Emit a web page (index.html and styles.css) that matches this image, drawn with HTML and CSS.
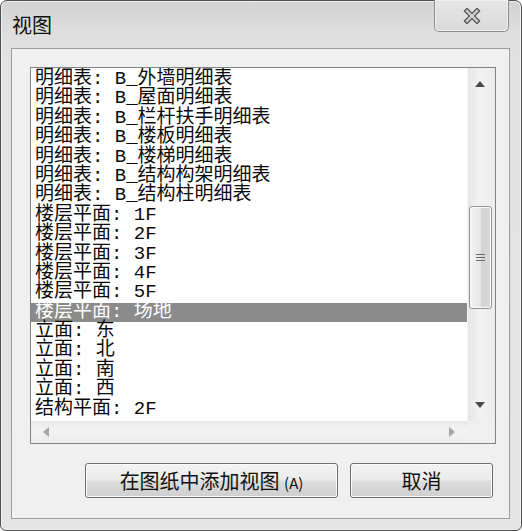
FILE: index.html
```html
<!DOCTYPE html>
<html lang="zh-CN">
<head>
    <meta charset="UTF-8">
    <title>视图</title>
    <link rel="stylesheet" href="styles.css">
</head>
<body>
    <div class="window">
        <div class="titlebar">
            <span class="title">视图</span>
            <div class="close-btn">
                <svg width="18" height="16" viewBox="0 0 18 16">
                    <path d="M4 3 L14 13 M14 3 L4 13" stroke="#5c5c5c" stroke-width="5" stroke-linecap="square" fill="none"/>
                    <path d="M4 3 L14 13 M14 3 L4 13" stroke="#d4d4d4" stroke-width="2.2" stroke-linecap="square" fill="none"/>
                </svg>
            </div>
        </div>

        <div class="client">
            <div class="listbox">
                <div class="list-content">
                    <div class="row">明细表: B_外墙明细表</div>
                    <div class="row">明细表: B_屋面明细表</div>
                    <div class="row">明细表: B_栏杆扶手明细表</div>
                    <div class="row">明细表: B_楼板明细表</div>
                    <div class="row">明细表: B_楼梯明细表</div>
                    <div class="row">明细表: B_结构构架明细表</div>
                    <div class="row">明细表: B_结构柱明细表</div>
                    <div class="row">楼层平面: 1F</div>
                    <div class="row">楼层平面: 2F</div>
                    <div class="row">楼层平面: 3F</div>
                    <div class="row">楼层平面: 4F</div>
                    <div class="row">楼层平面: 5F</div>
                    <div class="row selected">楼层平面: 场地</div>
                    <div class="row">立面: 东</div>
                    <div class="row">立面: 北</div>
                    <div class="row">立面: 南</div>
                    <div class="row">立面: 西</div>
                    <div class="row">结构平面: 2F</div>
                </div>

                <div class="vscroll">
                    <div class="arrow-btn">
                        <svg width="10" height="6" viewBox="0 0 10 6"><path d="M0 6 L5 0 L10 6 Z" fill="#4a4a4a"/></svg>
                    </div>
                    <div class="track">
                        <div class="thumb">
                            <svg width="9" height="8" viewBox="0 0 9 8">
                                <path d="M0 0.5 H9 M0 3.5 H9 M0 6.5 H9" stroke="#6a6a6a" stroke-width="1.2"/>
                            </svg>
                        </div>
                    </div>
                    <div class="arrow-btn">
                        <svg width="10" height="6" viewBox="0 0 10 6"><path d="M0 0 L10 0 L5 6 Z" fill="#4a4a4a"/></svg>
                    </div>
                </div>

                <div class="hscroll">
                    <div class="arrow-btn">
                        <svg width="6" height="10" viewBox="0 0 6 10"><path d="M6 0 L0 5 L6 10 Z" fill="#a6a6a6"/></svg>
                    </div>
                    <div class="arrow-btn">
                        <svg width="6" height="10" viewBox="0 0 6 10"><path d="M0 0 L6 5 L0 10 Z" fill="#a6a6a6"/></svg>
                    </div>
                </div>
                <div class="corner"></div>
            </div>

            <div class="buttons">
                <button class="btn btn-add">在图纸中添加视图 <span class="accel">(A)</span></button>
                <button class="btn btn-cancel">取消</button>
            </div>
        </div>
    </div>
</body>
</html>
```

FILE: styles.css
```css
html, body {
    margin: 0;
    padding: 0;
    background: #ffffff;
}

.window {
    box-sizing: border-box;
    width: 522px;
    height: 531px;
    border: 1px solid #4e4e4e;
    border-radius: 7px 7px 6px 6px;
    background: linear-gradient(to bottom, #d2d2d2 0px, #dedede 30px, #e2e2e2 60px, #e4e4e4 100%);
    box-shadow: inset 0 0 0 1px #f2f2f2;
    padding: 0 11px 11px 10px;
    display: flex;
    flex-direction: column;
    font-family: "Noto Sans CJK SC", sans-serif;
}

.titlebar {
    height: 47px;
    display: flex;
    justify-content: space-between;
    align-items: flex-start;
}

.title {
    margin: 13px 0 0 1px;
    font-size: 20px;
    line-height: 22px;
    color: #111;
}

.close-btn {
    box-sizing: border-box;
    width: 75px;
    height: 32px;
    margin: -1px 1px 0 0;
    border: 1px solid #8c8c8c;
    border-top: none;
    border-radius: 0 0 5px 5px;
    background: linear-gradient(to bottom, #e6e6e6, #dadada);
    box-shadow: inset 0 0 0 1px #f0f0f0;
    display: flex;
    align-items: center;
    justify-content: center;
}

.client {
    flex: 1;
    background: #f0f0f0;
    border: 1px solid #9c9c9c;
    padding: 18px 13px 0 18px;
    display: flex;
    flex-direction: column;
}

.listbox {
    box-sizing: border-box;
    height: 377px;
    border: 1px solid #828282;
    background: #ffffff;
    display: grid;
    grid-template-columns: 1fr 28px;
    grid-template-rows: 1fr 22px;
}

.list-content {
    overflow: hidden;
    padding-top: 2px;
    font-family: "Liberation Mono", "Noto Sans CJK SC", monospace;
    font-size: 19px;
    color: #0a0a0a;
}

.row {
    height: 19.4px;
    line-height: 19.4px;
    padding-left: 4px;
    white-space: pre;
}

.row.selected {
    background: #8b8b8b;
    color: #ffffff;
}

.vscroll {
    grid-row: 1;
    grid-column: 2;
    background: linear-gradient(to right, #e6e6e6, #f2f2f2 40%, #ececec);
    border-left: 1px solid #f6f6f6;
    display: flex;
    flex-direction: column;
}

.vscroll .arrow-btn {
    height: 32px;
    display: flex;
    align-items: center;
    justify-content: center;
    padding-right: 3px;
}

.track {
    flex: 1;
    padding-top: 106px;
}

.thumb {
    box-sizing: border-box;
    height: 103px;
    margin: 0 3px 0 1px;
    border: 1px solid #959595;
    border-radius: 3px;
    background: linear-gradient(to right, #f4f4f4, #e6e6e6 50%, #d4d4d4 51%, #d8d8d8);
    box-shadow: inset 0 0 0 1px #fafafa;
    display: flex;
    align-items: center;
    justify-content: center;
}

.hscroll {
    grid-row: 2;
    grid-column: 1;
    background: linear-gradient(to bottom, #e8e8e8, #f2f2f2 40%, #ececec);
    display: flex;
    justify-content: space-between;
    align-items: center;
}

.hscroll .arrow-btn {
    width: 30px;
    height: 22px;
    display: flex;
    align-items: center;
    justify-content: center;
}

.corner {
    grid-row: 2;
    grid-column: 2;
    background: #efefef;
}

.buttons {
    display: flex;
    justify-content: flex-end;
    gap: 12px;
    margin-top: 19px;
    padding-right: 3px;
}

.btn {
    box-sizing: border-box;
    height: 35px;
    border: 1px solid #6e6e6e;
    border-radius: 3px;
    background: linear-gradient(to bottom, #f3f3f3 0%, #ebebeb 48%, #dcdcdc 52%, #cfcfcf 100%);
    box-shadow: inset 0 0 0 1px #fbfbfb;
    font-family: "Noto Sans CJK SC", sans-serif;
    font-size: 20px;
    color: #111;
    padding: 0;
}

.accel {
    font-size: 15px;
}

.btn-add {
    width: 253px;
}

.btn-cancel {
    width: 143px;
}
```
